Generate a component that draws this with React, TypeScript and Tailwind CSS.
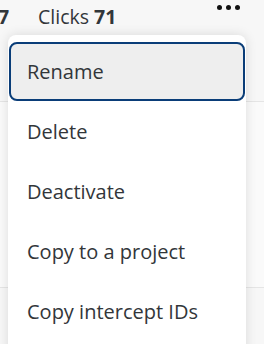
import { useState } from 'react';

const items = ['Rename', 'Delete', 'Deactivate', 'Copy to a project', 'Copy intercept IDs'];

export default function App() {
  const [active] = useState(0);

  return (
    <div
      className="relative w-[264px] h-[344px] overflow-hidden bg-[#f7f7f7] text-[#32363a]"
      style={{ fontFamily: '"Open Sans", "Noto Sans", sans-serif' }}
    >
      {/* table behind the menu */}
      <div className="h-[102px] border-b border-[#e5e5e5]">
        <div className="flex items-center h-[34px] text-[19.5px]">
          <span className="w-[40px] -ml-[2px] font-bold">7</span>
          <span>
            Clicks <span className="font-bold">71</span>
          </span>
          <div className="ml-auto mr-[24px] mb-[20px] flex gap-[4px]">
            <span className="w-[5px] h-[5px] rounded-full bg-[#111]" />
            <span className="w-[5px] h-[5px] rounded-full bg-[#111]" />
            <span className="w-[5px] h-[5px] rounded-full bg-[#111]" />
          </div>
        </div>
      </div>
      <div className="h-[186px] border-b border-[#e5e5e5] bg-[#fafafa]" />

      {/* context menu */}
      <div className="absolute left-[8px] top-[35px] w-[238px] h-[330px] bg-white rounded-[8px] shadow-[0_0_12px_rgba(0,0,0,0.12)] pt-[7px] px-[1px]">
        {items.map((label, i) => (
          <div
            key={label}
            className={
              i === active
                ? 'h-[59px] mb-[1px] flex items-center pl-[16px] rounded-[8px] border-2 border-[#0a3d78] bg-[#eeeeee] text-[20px]'
                : 'h-[60px] flex items-center pl-[18px] text-[20px]'
            }
          >
            {label}
          </div>
        ))}
      </div>
    </div>
  );
}
